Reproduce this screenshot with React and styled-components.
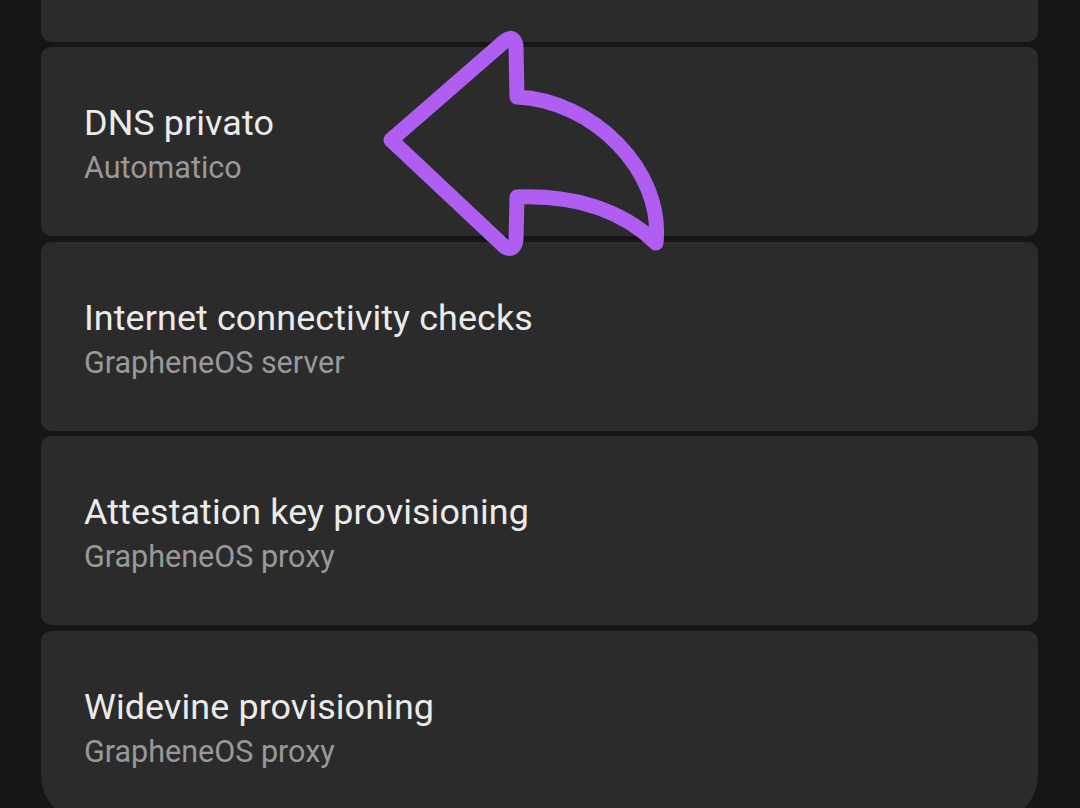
import React from "react";
import styled, { createGlobalStyle } from "styled-components";

const GlobalStyle = createGlobalStyle`
  html, body {
    margin: 0;
    padding: 0;
    background: #161616;
    overflow: hidden;
  }
  body {
    font-family: Roboto, "Noto Sans", "Liberation Sans", sans-serif;
  }
`;

const Screen = styled.div`
  position: relative;
  width: 1080px;
  height: 808px;
  overflow: hidden;
  background: #161616;
`;

const List = styled.div`
  display: flex;
  flex-direction: column;
  gap: 5.4px;
  padding: 0 42px 0 41px;
  margin-top: -147px;
`;

const Card = styled.div`
  height: 189px;
  box-sizing: border-box;
  background: #2b2b2b;
  border-radius: ${(p) => (p.$last ? "10px 10px 44px 44px" : "10px")};
  padding: 56px 43px 0;
`;

const Title = styled.div`
  font-size: 35.9px;
  line-height: 40px;
  color: #ebebeb;
  letter-spacing: 0.1px;
`;

const Subtitle = styled.div`
  margin-top: 5px;
  font-size: 30.5px;
  line-height: 40px;
  color: #999999;
`;

const Arrow = styled.svg`
  position: absolute;
  left: 0;
  top: 0;
  pointer-events: none;
`;

const items = [
  { title: "", sub: "" },
  { title: "DNS privato", sub: "Automatico" },
  { title: "Internet connectivity checks", sub: "GrapheneOS server" },
  { title: "Attestation key provisioning", sub: "GrapheneOS proxy" },
  { title: "Widevine provisioning", sub: "GrapheneOS proxy" },
];

export default function App() {
  return (
    <Screen>
      <GlobalStyle />
      <List>
        {items.map((it, i) => (
          <Card key={i} $last={i === items.length - 1}>
            {it.title && <Title>{it.title}</Title>}
            {it.sub && <Subtitle>{it.sub}</Subtitle>}
          </Card>
        ))}
      </List>
      <Arrow width="1080" height="808" viewBox="0 0 1080 808">
        <path
          d="M391 140 L506 40 Q514 35 516 46 L517 97 C592 100 664 170 656 243 C620 208 570 195 517 197 L516 240 Q514 252 505 247 Z"
          fill="none"
          stroke="#b05ef2"
          strokeWidth="15"
          strokeLinejoin="round"
          strokeLinecap="round"
        />
      </Arrow>
    </Screen>
  );
}
